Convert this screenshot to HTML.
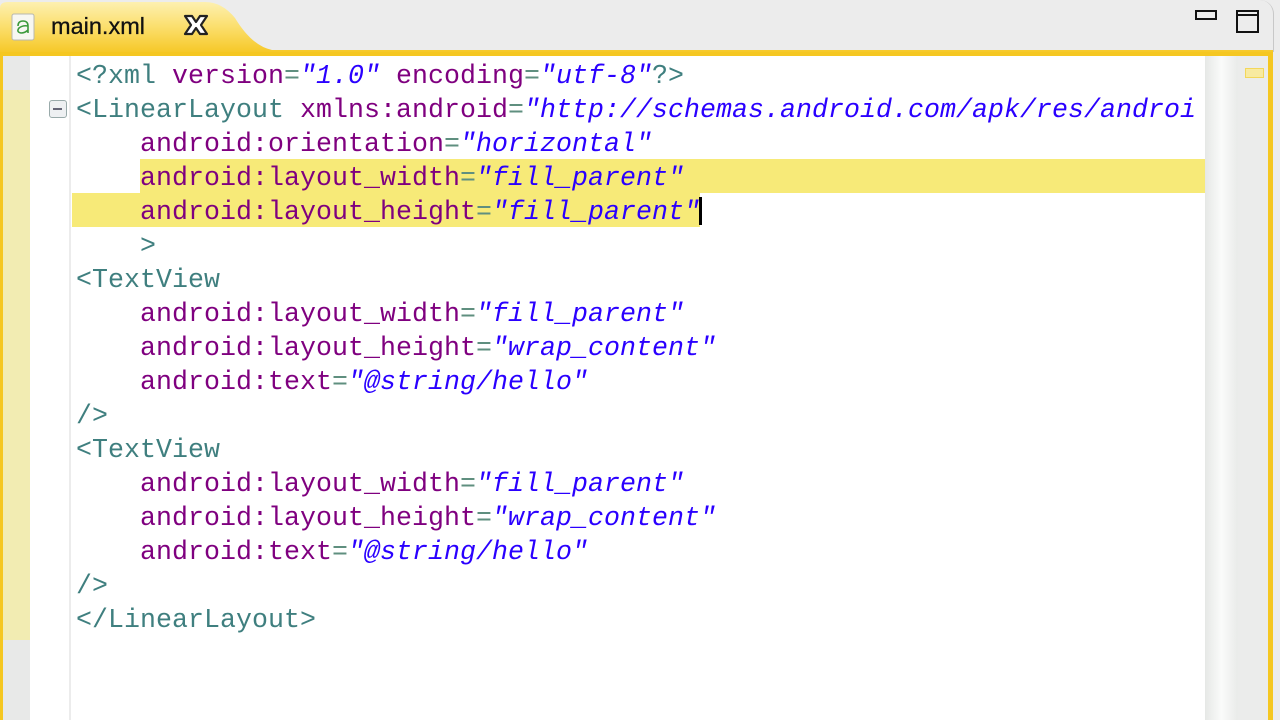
<!DOCTYPE html>
<html><head><style>
body{margin:0;width:1280px;height:720px;overflow:hidden;background:#ececec;position:relative;font-family:"Liberation Sans",sans-serif}
.abs{position:absolute}
#code{position:absolute;left:76px;top:59px;font-family:"Liberation Mono",monospace;font-size:26.6px;line-height:34px;white-space:pre;letter-spacing:0.04px}
.t{color:#3f7f7f}.a{color:#7f007f}.v{color:#2a00ff;font-style:italic}.e{color:#5f8f7f}
</style></head><body>
<div class="abs" style="left:0;top:0;width:1280px;height:52px;background:#ececec"></div>
<div class="abs" style="right:6px;top:0;width:40px;height:52px;border-right:1px solid #c8c8c8;border-radius:0 14px 0 0"></div>
<svg class="abs" style="left:0;top:0" width="1280" height="60">
<defs><linearGradient id="g" x1="0" y1="0" x2="0" y2="1"><stop offset="0" stop-color="#fdf0b0"/><stop offset="0.45" stop-color="#fbdf6e"/><stop offset="1" stop-color="#f5c51e"/></linearGradient></defs>
<path d="M0 8 Q0 2 8 2 L205 2 Q222 2 235 18 Q252 46 272 50 L1273 50 L1273 56 L0 56 Z" fill="url(#g)"/>
<rect x="1196" y="11" width="20" height="8" fill="none" stroke="#111" stroke-width="2"/>
<rect x="1237" y="11" width="21" height="21" fill="none" stroke="#111" stroke-width="2"/>
<line x1="1237" y1="15" x2="1258" y2="15" stroke="#111" stroke-width="2"/>
<rect x="12" y="14" width="22" height="26" rx="2" fill="#f7f7f2" stroke="#b8b8b0"/>
<path d="M18 26 q0-5 5-5 q5 0 5 5 v7 M28 26 q-5 -1 -9 2 q-3 4 2 5 q4 0 7 -3" fill="none" stroke="#3c9a3c" stroke-width="1.6"/>
<path d="M185 16 l7 0 l4 6 l4-6 l7 0 l-6 9 l6 9 l-7 0 l-4-6 l-4 6 l-7 0 l6-9z" fill="#fff" stroke="#222" stroke-width="2.2" stroke-linejoin="round"/>
</svg>
<div class="abs" style="left:51px;top:13px;font-size:23.5px;color:#111;-webkit-text-stroke:0.3px #111">main.xml</div>
<div class="abs" style="left:0;top:52px;width:1273px;height:668px;background:#f5c721"></div>
<div class="abs" style="left:3px;top:56px;width:1265px;height:664px;background:#fff"></div>
<div class="abs" style="left:3px;top:56px;width:27px;height:664px;background:#e8e9e8"></div>
<div class="abs" style="left:3px;top:90px;width:27px;height:550px;background:#f2ecb2"></div>
<div class="abs" style="left:69px;top:56px;width:2px;height:664px;background:#ececec"></div>
<div class="abs" style="left:1238px;top:56px;width:30px;height:664px;background:#ebeceb"></div>
<div class="abs" style="left:1245px;top:68px;width:17px;height:8px;background:#f8eaa0;border:1px solid #f3d75a"></div>
<div class="abs" style="left:140px;top:159px;width:1065px;height:34px;background:#f7ea78"></div>
<div class="abs" style="left:72px;top:193px;width:628px;height:34px;background:#f7ea78"></div>
<div class="abs" style="left:699px;top:197px;width:3px;height:28px;background:#000"></div>
<div class="abs" style="left:49px;top:100px;width:16px;height:16px;border:1px solid #9aa;border-radius:3px;background:#eef0f2"></div>
<div class="abs" style="left:53px;top:108px;width:9px;height:2px;background:#667"></div>
<div id="code"><span class="t">&lt;?xml</span> <span class="a">version</span><span class="e">=</span><span class="v">"1.0"</span> <span class="a">encoding</span><span class="e">=</span><span class="v">"utf-8"</span><span class="t">?&gt;</span>
<span class="t">&lt;LinearLayout</span> <span class="a">xmlns:android</span><span class="e">=</span><span class="v">"http://schemas.android.com/apk/res/androi</span>
    <span class="a">android:orientation</span><span class="e">=</span><span class="v">"horizontal"</span>
    <span class="a">android:layout_width</span><span class="e">=</span><span class="v">"fill_parent"</span>
    <span class="a">android:layout_height</span><span class="e">=</span><span class="v">"fill_parent"</span>
    <span class="t">&gt;</span>
<span class="t">&lt;TextView</span>
    <span class="a">android:layout_width</span><span class="e">=</span><span class="v">"fill_parent"</span>
    <span class="a">android:layout_height</span><span class="e">=</span><span class="v">"wrap_content"</span>
    <span class="a">android:text</span><span class="e">=</span><span class="v">"@string/hello"</span>
<span class="t">/&gt;</span>
<span class="t">&lt;TextView</span>
    <span class="a">android:layout_width</span><span class="e">=</span><span class="v">"fill_parent"</span>
    <span class="a">android:layout_height</span><span class="e">=</span><span class="v">"wrap_content"</span>
    <span class="a">android:text</span><span class="e">=</span><span class="v">"@string/hello"</span>
<span class="t">/&gt;</span>
<span class="t">&lt;/LinearLayout&gt;</span></div>
<div class="abs" style="left:1205px;top:56px;width:33px;height:664px;background:linear-gradient(90deg,#e6e8e6,#fafbfa 50%,#e9ebe9)"></div>
</body></html>
